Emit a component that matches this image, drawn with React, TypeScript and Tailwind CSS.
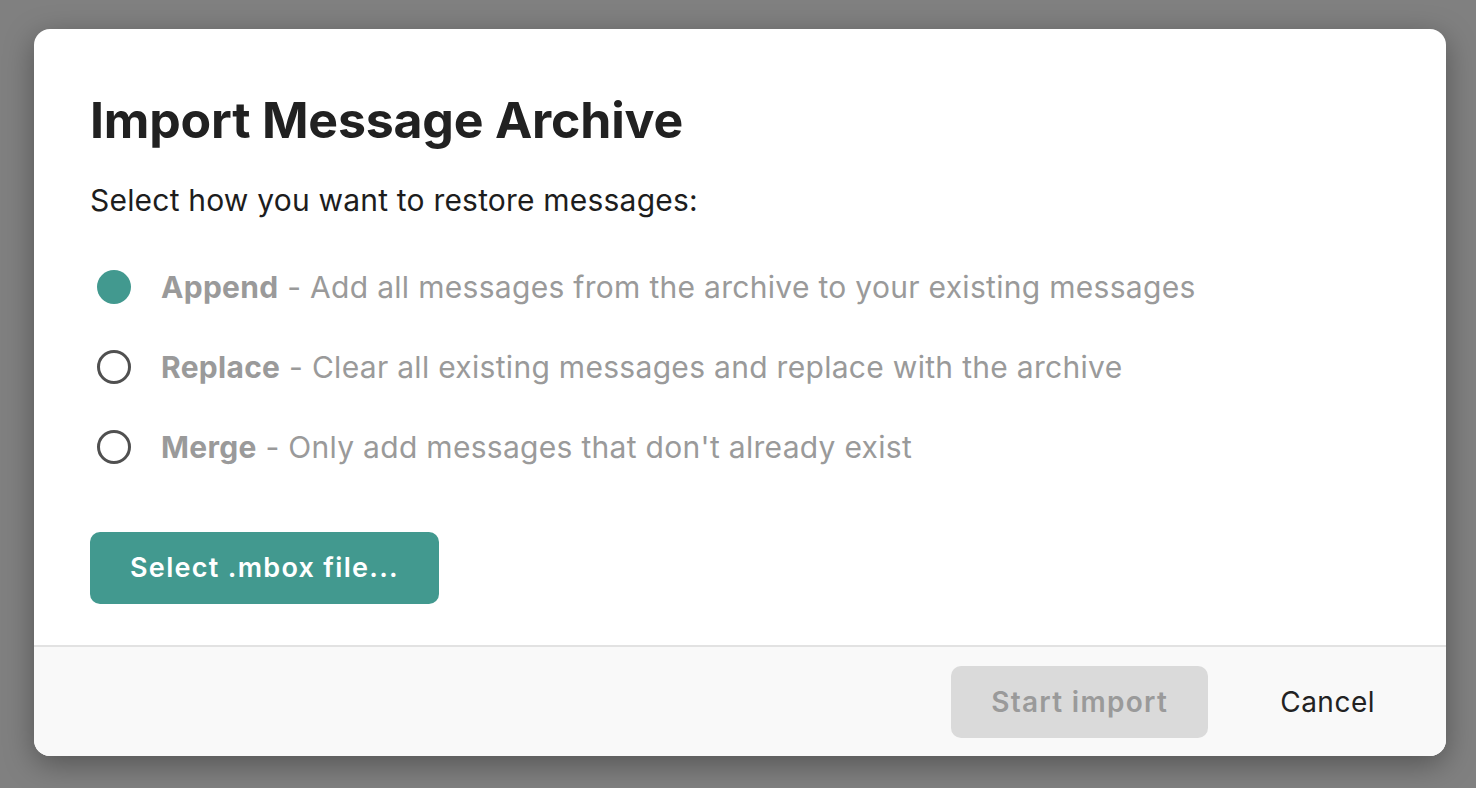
import React from "react";

const options = [
  { label: "Append", desc: "Add all messages from the archive to your existing messages", checked: true },
  { label: "Replace", desc: "Clear all existing messages and replace with the archive", checked: false },
  { label: "Merge", desc: "Only add messages that don't already exist", checked: false },
];

export default function App() {
  return (
    <div className="w-[1476px] h-[788px] bg-[#808080] pt-[29px] pl-[34px]" style={{ fontFamily: "Inter, 'Noto Sans', sans-serif" }}>
      <div className="w-[1412px] h-[727px] bg-white rounded-[16px] overflow-hidden flex flex-col shadow-[0_8px_30px_rgba(0,0,0,0.35)]">
        <div className="flex-1 pl-[56px] pt-[61px]">
          <h1 className="text-[50px] leading-[60px] font-bold text-[#212121] tracking-[-0.2px]">Import Message Archive</h1>
          <p className="mt-[32px] text-[30px] leading-[36px] text-[#1d1d1d] tracking-[0.2px]">Select how you want to restore messages:</p>
          <div className="mt-[49px] flex flex-col gap-[40px]">
            {options.map((o) => (
              <div key={o.label} className="flex items-center h-[40px]">
                {o.checked ? (
                  <div className="w-[34px] h-[34px] rounded-full bg-[#42998f] ml-[7px]" />
                ) : (
                  <div className="w-[34px] h-[34px] rounded-full border-[3.5px] border-[#505050] ml-[7px]" />
                )}
                <div className="ml-[30px] text-[30px] leading-[36px] text-[#9a9a9a] tracking-[0.3px]">
                  <span className="font-bold">{o.label}</span> - {o.desc}
                </div>
              </div>
            ))}
          </div>
          <button className="mt-[65px] w-[349px] h-[72px] rounded-[10px] bg-[#42998f] text-white text-[27px] font-semibold tracking-[1.3px]">
            Select .mbox file...
          </button>
        </div>
        <div className="h-[111px] bg-[#f9f9f9] border-t-2 border-[#e2e2e2] flex items-center justify-end pr-[71px]">
          <button className="w-[257px] h-[72px] rounded-[10px] bg-[#dadada] text-[#9a9a9a] text-[28px] font-semibold tracking-[1.3px]">
            Start import
          </button>
          <span className="ml-[72px] text-[28px] text-[#222] tracking-[0.5px]">Cancel</span>
        </div>
      </div>
    </div>
  );
}
